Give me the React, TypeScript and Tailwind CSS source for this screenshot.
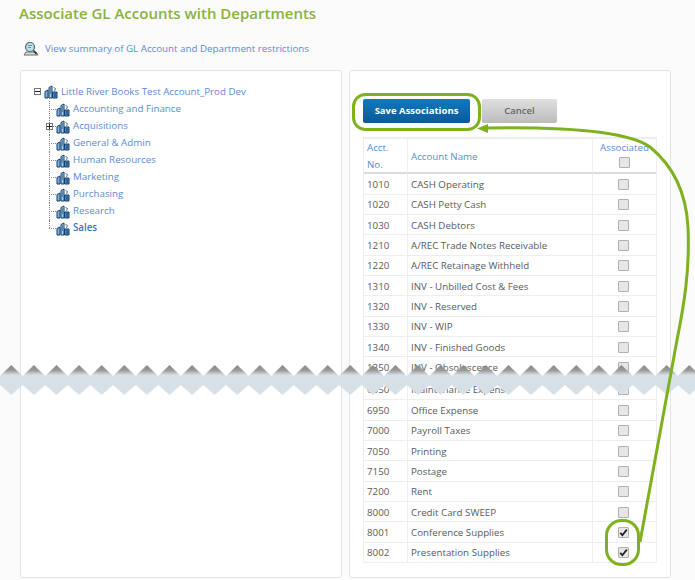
const departments = [
  "Accounting and Finance",
  "Acquisitions",
  "General & Admin",
  "Human Resources",
  "Marketing",
  "Purchasing",
  "Research",
  "Sales",
];

const accounts = [
  { no: "1010", name: "CASH Operating" },
  { no: "1020", name: "CASH Petty Cash" },
  { no: "1030", name: "CASH Debtors" },
  { no: "1210", name: "A/REC Trade Notes Receivable" },
  { no: "1220", name: "A/REC Retainage Withheld" },
  { no: "1310", name: "INV - Unbilled Cost & Fees" },
  { no: "1320", name: "INV - Reserved" },
  { no: "1330", name: "INV - WIP" },
  { no: "1340", name: "INV - Finished Goods" },
  { no: "1350", name: "INV - Obsolescence" },
  { no: "6350", name: "Maintenance Expense" },
  { no: "6950", name: "Office Expense" },
  { no: "7000", name: "Payroll Taxes" },
  { no: "7050", name: "Printing" },
  { no: "7150", name: "Postage" },
  { no: "7200", name: "Rent" },
  { no: "8000", name: "Credit Card SWEEP" },
  { no: "8001", name: "Conference Supplies", checked: true },
  { no: "8002", name: "Presentation Supplies", checked: true },
];

const BuildingIcon = () => (
  <svg width="14" height="14" viewBox="0 0 14 14" className="shrink-0">
    <path d="M1 13V6.500L4 5v8z" fill="#7fb2dc" stroke="#123f6d" />
    <path d="M5 13V2.500L8 1v12z" fill="#a9cdea" stroke="#123f6d" />
    <path d="M8.500 13V7h4.500v6z" fill="#4f86b8" stroke="#123f6d" />
    <path d="M6 4h1M6 6h1M6 8h1M10 9h2M10 11h2" stroke="#123f6d" />
    <path d="M9.500 2.500l2 1-1 2.500" fill="none" stroke="#3f78aa" />
  </svg>
);

const SummaryIcon = () => (
  <svg width="16" height="15" viewBox="0 0 16 15" className="shrink-0">
    <path d="M1 14l2-3h10l2 3z" fill="#d9dde0" stroke="#6b6b6b" />
    <circle cx="7" cy="6" r="4.500" fill="#bfe0e8" stroke="#4c6a78" strokeWidth="1.200" />
    <path d="M5 4.500h4M5 6.500h3" stroke="#6d95a8" />
    <path d="M10.500 9.500l3 3.500" stroke="#333" strokeWidth="1.600" />
  </svg>
);

const TreeToggle = ({ open }: { open?: boolean }) => (
  <span className="relative block h-[7px] w-[7px] shrink-0 border border-[#777] bg-white">
    <span className="absolute left-0 top-[2px] h-px w-[5px] bg-[#222]" />
    {!open && <span className="absolute left-[2px] top-0 h-[5px] w-px bg-[#222]" />}
  </span>
);

const Checkbox = ({ checked }: { checked?: boolean }) => (
  <span className="flex h-[11px] w-[11px] items-center justify-center rounded-[1px] border border-[#b0b0b0] bg-[#e6e6e6]">
    {checked && (
      <svg width="9" height="9" viewBox="0 0 9 9">
        <path d="M1.200 4.800L3.400 7.200 7.800 1.600" fill="none" stroke="#222" strokeWidth="1.800" />
      </svg>
    )}
  </span>
);

const TornStrip = () => (
  <svg width="695" height="30" className="absolute left-0 top-[365px]">
    <defs>
      <linearGradient id="tornShade" x1="0" y1="0" x2="0" y2="1">
        <stop offset="0" stopColor="#858585" />
        <stop offset="0.18" stopColor="#9a9a9a" />
        <stop offset="0.29" stopColor="#c9cdd0" />
        <stop offset="0.34" stopColor="#d8e0e7" />
        <stop offset="1" stopColor="#d8e0e7" />
      </linearGradient>
      <pattern id="tornTeeth" width="22.6" height="30" patternUnits="userSpaceOnUse" x="0">
        <path d="M0 11L11.300 0 22.600 11V20L11.300 30 0 20z" fill="url(#tornShade)" />
      </pattern>
    </defs>
    <rect width="695" height="30" fill="url(#tornTeeth)" />
  </svg>
);

const Callouts = () => (
  <svg width="695" height="580" className="pointer-events-none absolute left-0 top-0" fill="none">
    <rect x="353.500" y="94.500" width="126" height="35" rx="12" stroke="#7fb11f" strokeWidth="3" />
    <rect x="606.500" y="520.500" width="32" height="44" rx="15" stroke="#7fb11f" strokeWidth="3" />
    <path
      d="M640 542L677 340C684 305 690 270 688 227C686 190 672 165 650 147C625 129 550 127 486 128"
      stroke="#7fb11f"
      strokeWidth="3"
    />
    <path d="M477 128.500L488 124V133z" fill="#7fb11f" />
  </svg>
);

export default function App() {
  return (
    <div className="relative h-[580px] w-[695px] overflow-hidden bg-[#fbfbfb] font-['Open_Sans',sans-serif] text-[9.75px] text-[#5a5a5a]">
      <div className="flex flex-col px-[20px]">
        <h1 className="-ml-px pt-[3px] text-[15px] font-semibold leading-[20px] text-[#8ab23c]">
          Associate GL Accounts with Departments
        </h1>
        <div className="mt-[17px] flex h-[16px] items-center gap-[6px] pl-[3px] text-[#5a8dd6]">
          <SummaryIcon />
          <span className="pt-[2px]">View summary of GL Account and Department restrictions</span>
        </div>

        <div className="mt-[14px] flex gap-[7px]">
          {/* departments tree */}
          <section className="h-[508px] w-[322px] rounded-[3px] border border-[#e4e4e4] bg-white pl-[13px] pt-[12px] text-[#5a8dd6]">
            <div className="mb-[1px] flex h-[17px] items-center gap-[3px]">
              <TreeToggle open />
              <BuildingIcon />
              <span className="pt-[2px]">Little River Books Test Account_Prod Dev</span>
            </div>
            <div className="pl-[14px]">
              {departments.map((dept, i) => (
                <div key={dept} className="relative flex h-[17px] items-center pl-[8px]">
                  <span
                    className={`absolute left-[1px] top-0 border-l border-dotted border-[#888] ${
                      i === departments.length - 1 ? "h-[8px]" : "h-full"
                    }`}
                  />
                  <span className="absolute left-[1px] top-[8px] w-[7px] border-t border-dotted border-[#888]" />
                  {dept === "Acquisitions" && (
                    <span className="absolute left-[-2px] top-[5px]">
                      <TreeToggle />
                    </span>
                  )}
                  <BuildingIcon />
                  <span className={`ml-[3px] ${dept === "Sales" ? "font-semibold text-[#3f72bb]" : ""}`}>{dept}</span>
                </div>
              ))}
            </div>
          </section>

          {/* accounts table */}
          <section className="h-[508px] w-[322px] rounded-[3px] border border-[#e4e4e4] bg-white pl-[13px] pt-[28px]">
            <div className="flex gap-[12px]">
              <button className="h-[24px] w-[107px] rounded-[2px] bg-gradient-to-b from-[#1079bf] to-[#0a5a98] text-[9.5px] font-bold text-white">
                Save Associations
              </button>
              <button className="h-[24px] w-[75px] rounded-[2px] bg-gradient-to-b from-[#e0e0e0] to-[#bcbcbc] text-[9.5px] font-semibold text-[#666]">
                Cancel
              </button>
            </div>

            <div className="mt-[14px] w-[294px] border-x border-t-2 border-[#eeeeee]">
              <div className="grid h-[35.4px] grid-cols-[43px_185px_64px] border-b-2 border-[#dcdcdc] leading-[17px] text-[#5a8dd6]">
                <div className="flex flex-col justify-center pl-[3px]">
                  <span>Acct.</span>
                  <span>No.</span>
                </div>
                <div className="flex items-center border-l border-[#eeeeee] pl-[3px]">Account Name</div>
                <div className="flex flex-col items-center border-l border-[#eeeeee]">
                  <span>Associated</span>
                  <span className="mt-[1px]">
                    <Checkbox />
                  </span>
                </div>
              </div>
              {accounts.map((acct) => (
                <div
                  key={acct.no}
                  className={`grid grid-cols-[43px_185px_64px] border-b border-[#eeeeee] ${
                    acct.no === "6350" ? "h-[22.8px] items-end" : "h-[20.33px] items-center"
                  }`}
                >
                  <div className="flex h-[20px] items-center pl-[3px] pt-[2px]">{acct.no}</div>
                  <div className="flex h-[20px] items-center border-l border-[#eeeeee] pl-[3px] pt-[2px]">
                    {acct.name}
                  </div>
                  <div className="flex h-[20px] items-center justify-center border-l border-[#eeeeee] pr-[2px]">
                    <Checkbox checked={acct.checked} />
                  </div>
                </div>
              ))}
            </div>
          </section>
        </div>
      </div>

      <TornStrip />
      <Callouts />
    </div>
  );
}
